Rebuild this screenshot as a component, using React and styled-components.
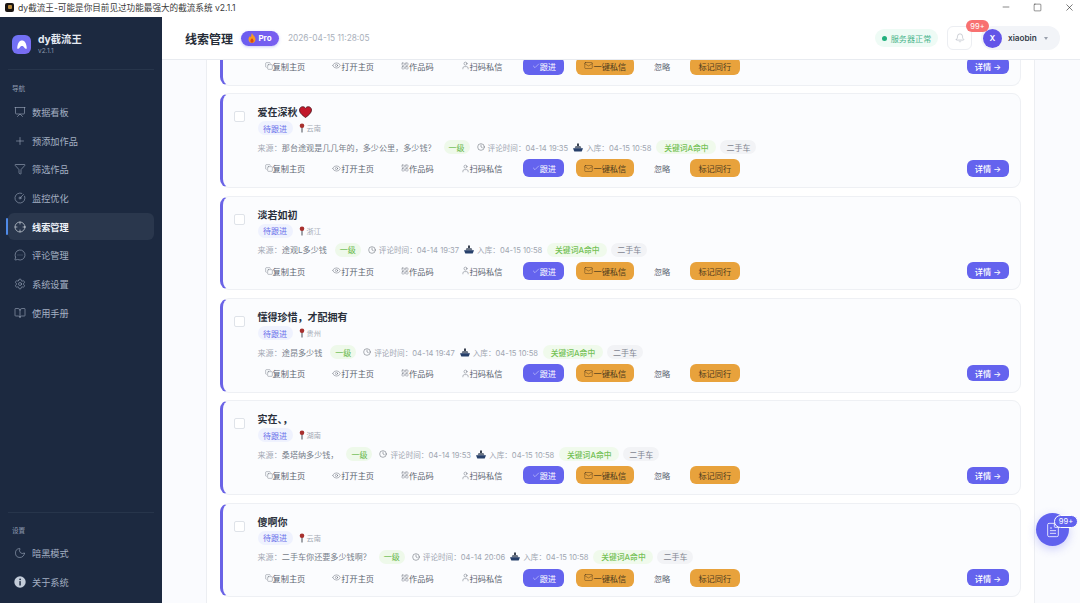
import React from "react";
import styled, { createGlobalStyle } from "styled-components";
import {
  Presentation, Plus, Funnel, CircleGauge, Crosshair, MessageCircleMore, Settings, BookOpen, Moon,
  Copy, Eye, LayoutGrid, User, Check, Mail, Clock, Bell, Minus, Square, X, FileText,
} from "lucide-react";

const FONT = `Inter, "Noto Sans CJK SC", "Noto Sans", sans-serif`;

const Global = createGlobalStyle`
  html, body { margin: 0; padding: 0; height: 100%; overflow: hidden; background: #fff; }
  * { box-sizing: border-box; }
  body { font-family: ${FONT}; }
`;

const Window = styled.div`
  position: relative;
  width: 1080px;
  height: 603px;
  display: flex;
  flex-direction: column;
  overflow: hidden;
`;

const TitleBar = styled.div`
  height: 17px;
  flex: none;
  display: flex;
  align-items: center;
  padding: 0 0 3px 5px;
  background: #fff;
  color: #3a3a3a;
  font-size: 8.6px;
`;
const AppGlyph = styled.div`
  width: 9px;
  height: 9px;
  border-radius: 2px;
  background: #1a1512;
  margin-right: 4px;
  display: flex;
  align-items: center;
  justify-content: center;
  &::after { content: ""; width: 4px; height: 4px; background: #b98a3a; border-radius: 1px; }
`;
const WindowControls = styled.div`
  margin-left: auto;
  display: flex;
  align-items: center;
  color: #222;
  padding-right: 5px;
  gap: 22px;
`;

const Body = styled.div`
  flex: 1;
  min-height: 0;
  display: flex;
`;

const Sidebar = styled.aside`
  width: 162px;
  flex: none;
  background: #1c2940;
  display: flex;
  flex-direction: column;
  padding: 0 8px 6px;
  color: #a7b3c6;
`;
const Brand = styled.div`
  height: 53px;
  display: flex;
  align-items: center;
  gap: 7px;
  padding: 3px 4px 0;
  border-bottom: 1px solid #27354b;
`;
const LogoBox = styled.div`
  width: 19px;
  height: 19px;
  border-radius: 6px;
  background: linear-gradient(135deg, #6d72f5, #7c6cf2);
  display: flex;
  align-items: center;
  justify-content: center;
`;
const BrandName = styled.div`
  font-size: 10.3px;
  font-weight: 700;
  line-height: 13px;
  color: #e5eaf2;
`;
const BrandVersion = styled.div`
  font-size: 6.5px;
  line-height: 10px;
  color: #8b98ac;
`;
const SectionLabel = styled.div`
  font-size: 6.6px;
  line-height: 10px;
  color: #8f9cb0;
  padding-left: 4px;
  margin: ${p => p.$top}px 0 ${p => p.$bottom}px;
`;
const NavItem = styled.div`
  position: relative;
  height: 27px;
  margin-bottom: 1.7px;
  border-radius: 6px;
  display: flex;
  align-items: center;
  gap: 6px;
  padding-left: 6px;
  font-size: 9.2px;
  font-weight: ${p => (p.$active ? 700 : 400)};
  color: ${p => (p.$active ? "#eef2f8" : "#a4b0c3")};
  background: ${p => (p.$active ? "#2a374d" : "transparent")};
  ${p => p.$active && `
    &::before {
      content: "";
      position: absolute;
      left: -2px;
      top: 5px;
      bottom: 5px;
      width: 2px;
      border-radius: 2px;
      background: #4f8ae8;
    }
  `}
`;
const Spacer = styled.div`
  flex: 1;
`;
const SideDivider = styled.div`
  height: 1px;
  background: #27354b;
`;

const Main = styled.main`
  flex: 1;
  min-width: 0;
  display: flex;
  flex-direction: column;
`;
const Header = styled.header`
  position: relative;
  z-index: 2;
  height: 43px;
  flex: none;
  background: #fff;
  border-bottom: 1px solid #e8ebf0;
  display: flex;
  align-items: center;
  padding: 0 20px 0 23px;
`;
const PageTitle = styled.h1`
  margin: 0;
  font-size: 12px;
  font-weight: 600;
  color: #252c38;
`;
const ProBadge = styled.div`
  margin-left: 8px;
  height: 15px;
  width: 38px;
  border-radius: 8px;
  background: linear-gradient(90deg, #6a5cf0, #7a5ff0);
  box-shadow: 0 1px 3px rgba(99, 102, 241, .35);
  display: flex;
  align-items: center;
  justify-content: center;
  gap: 2px;
  color: #fff;
  font-size: 8px;
  font-weight: 700;
`;
const Stamp = styled.div`
  margin-left: 9px;
  font-size: 8.3px;
  color: #a9b0bb;
`;
const HeaderRight = styled.div`
  margin-left: auto;
  display: flex;
  align-items: center;
`;
const ServerPill = styled.div`
  width: 63px;
  height: 18px;
  border-radius: 9px;
  background: #eefbf5;
  color: #4bb58c;
  font-size: 8.1px;
  display: flex;
  align-items: center;
  justify-content: center;
  gap: 4px;
  margin-right: 9px;
`;
const Dot = styled.span`
  width: 5px;
  height: 5px;
  border-radius: 50%;
  background: #22b07d;
`;
const BellButton = styled.div`
  position: relative;
  width: 25px;
  height: 24px;
  border: 1px solid #eceef2;
  border-radius: 6px;
  background: #fff;
  display: flex;
  align-items: center;
  justify-content: center;
  color: #9aa1ad;
  margin-right: 9px;
`;
const BellBadge = styled.span`
  position: absolute;
  left: 18px;
  top: -7px;
  width: 23px;
  height: 12px;
  border-radius: 6px;
  background: #f87171;
  color: #fff;
  font-size: 7.5px;
  display: flex;
  align-items: center;
  justify-content: center;
  z-index: 1;
`;
const UserPill = styled.div`
  width: 79px;
  height: 24px;
  border-radius: 12px;
  background: #f2f4f8;
  display: flex;
  align-items: center;
  padding-left: 2px;
  color: #343b48;
  font-size: 8.2px;
  font-weight: 600;
`;
const Avatar = styled.div`
  width: 19px;
  height: 19px;
  border-radius: 50%;
  background: #6355e8;
  color: #fff;
  font-size: 8px;
  font-weight: 600;
  display: flex;
  align-items: center;
  justify-content: center;
  margin-right: 6px;
`;
const Caret = styled.span`
  margin-left: 7px;
  width: 0;
  height: 0;
  border-left: 2.5px solid transparent;
  border-right: 2.5px solid transparent;
  border-top: 3px solid #9aa1ad;
`;

const Content = styled.div`
  flex: 1;
  min-height: 0;
  background: #fafbfe;
  padding-left: 44px;
  padding-right: 45px;
  overflow: hidden;
`;
const Panel = styled.section`
  height: 100%;
  background: #fff;
  border-left: 1px solid #eceef2;
  border-right: 1px solid #eceef2;
  padding: 0 13px 0 13px;
  display: grid;
  grid-template-rows: 25.5px repeat(5, 94.5px);
  row-gap: 7.85px;
  align-content: start;
`;
const Card = styled.article`
  border: 1px solid #eef0f4;
  border-left: 3px solid #6a63e6;
  border-radius: 9px;
  background: #fbfcfe;
  display: flex;
  padding: 10px 11px 9px 11px;
  min-height: 0;
`;
const ClippedCard = styled(Card)`
  border-top: none;
  border-top-left-radius: 0;
  border-top-right-radius: 0;
  padding-top: 0;
  overflow: hidden;
  align-items: flex-end;
  padding-bottom: 10px;
  padding-left: 34.5px;
`;
const CheckBox = styled.span`
  width: 10.5px;
  height: 11px;
  flex: none;
  border: 1px solid #dfe3e9;
  border-radius: 2px;
  background: #fff;
  margin: 7px 13px 0 0;
`;
const CardBody = styled.div`
  flex: 1;
  min-width: 0;
  display: flex;
  flex-direction: column;
`;
const NameLine = styled.div`
  height: 15px;
  display: flex;
  align-items: center;
  gap: 1px;
  font-size: 10px;
  font-weight: 600;
  color: #2a303b;
`;
const TagLine = styled.div`
  height: 14px;
  margin-top: 2px;
  display: flex;
  align-items: center;
  gap: 6px;
`;
const StatusTag = styled.span`
  width: 35px;
  height: 14px;
  border-radius: 7px;
  background: #eff2fe;
  color: #6d70ea;
  font-size: 8px;
  display: flex;
  align-items: center;
  justify-content: center;
`;
const Region = styled.span`
  display: flex;
  align-items: center;
  gap: 2px;
  font-size: 7.2px;
  color: #a3a9b4;
`;
const MetaLine = styled.div`
  height: 14px;
  margin-top: 5px;
  display: flex;
  align-items: center;
  font-size: 8.1px;
  color: #8d939f;
  white-space: nowrap;
`;
const Source = styled.span`
  color: #767c89;
  & > em { font-style: normal; color: #a3a9b4; }
`;
const LevelPill = styled.span`
  width: 26px;
  height: 14px;
  margin-left: 8px;
  border-radius: 7px;
  background: #eef9ea;
  color: #68b84b;
  font-size: 8px;
  display: flex;
  align-items: center;
  justify-content: center;
`;
const MetaTime = styled.span`
  margin-left: ${p => p.$left}px;
  display: flex;
  align-items: center;
  gap: 3px;
  color: #a0a6b1;
  font-size: 7.6px;
`;
const TimeIcon = styled.span`
  display: flex;
  color: #3f4652;
`;
const KeywordPill = styled.span`
  margin-left: 5px;
  height: 14px;
  width: 60px;
  border-radius: 7px;
  background: #f0faec;
  color: #74c155;
  font-size: 7.8px;
  font-weight: 500;
  display: flex;
  align-items: center;
  justify-content: center;
`;
const CategoryPill = styled.span`
  margin-left: 4px;
  height: 14px;
  width: 36px;
  border-radius: 7px;
  background: #f2f3f6;
  color: #7f8591;
  font-size: 8px;
  display: flex;
  align-items: center;
  justify-content: center;
`;
const ActionLine = styled.div`
  height: 18px;
  margin-top: 5px;
  padding-left: 7px;
  display: flex;
  align-items: center;
  flex: none;
`;
const LinkGroup = styled.div`
  display: flex;
  gap: 27px;
  margin-right: 21px;
`;
const ButtonGroup = styled.div`
  display: flex;
  align-items: center;
  gap: 12px;
`;
const LinkAction = styled.span`
  display: flex;
  align-items: center;
  font-size: 8.2px;
  color: #5c6370;
  white-space: nowrap;
`;
const FilledButton = styled.span`
  height: 18px;
  width: ${p => p.$w}px;
  border-radius: 6px;
  display: flex;
  align-items: center;
  justify-content: center;
  font-size: 8.2px;
  white-space: nowrap;
  background: ${p => (p.$tone === "orange" ? "#e8a23c" : "#6463ee")};
  color: ${p => (p.$tone === "orange" ? "#4e3b1e" : "#fff")};
`;
const IgnoreButton = styled.span`
  padding: 0 7.5px;
  font-size: 8.2px;
  color: #5c6370;
`;
const DetailButton = styled(FilledButton)`
  margin-left: auto;
  width: 42px;
  height: 16.5px;
  font-weight: 500;
`;

const FloatButton = styled.div`
  position: absolute;
  left: 1036px;
  top: 513px;
  width: 33px;
  height: 33px;
  border-radius: 50%;
  background: #6061ee;
  box-shadow: 0 3px 10px rgba(99, 102, 241, .3);
  color: #fff;
  display: flex;
  align-items: center;
  justify-content: center;
  z-index: 3;
`;
const FloatBadge = styled.span`
  position: absolute;
  left: 18px;
  top: 2px;
  width: 24px;
  height: 13px;
  border-radius: 7px;
  border: 1px solid #fff;
  background: #6061ee;
  color: #fff;
  font-size: 7.5px;
  display: flex;
  align-items: center;
  justify-content: center;
`;

const Logo = () => (
  <svg width="12" height="12" viewBox="0 0 12 12" fill="#fff">
    <path d="M6 1.5C3.4 1.5 1.5 4 1.2 9.5c1 .5 1.8.2 2.4-.8C4.2 7.5 5 7 6 7s1.8.5 2.4 1.7c.6 1 1.4 1.3 2.4.8C10.500 4 8.600 1.500 6 1.500z" />
  </svg>
);
const Flame = () => (
  <svg width="8" height="10" viewBox="0 0 8 10">
    <path d="M4 0C4.500 2 7.500 3.500 7.500 6.300 7.500 8.500 5.900 10 4 10S.5 8.500.5 6.300C.5 4.700 1.500 3.800 2 3c.3.700.6 1 1 1.200C3.300 2.800 3.300 1.200 4 0z" fill="#f59a23" />
    <path d="M4 5c.4 1 1.600 1.400 1.600 2.800C5.600 9 4.900 9.700 4 9.700S2.400 9 2.400 7.800C2.400 6.600 3.600 6 4 5z" fill="#d9480f" />
  </svg>
);
const Heart = () => (
  <svg width="13" height="12" viewBox="0 0 13 12">
    <path d="M6.500 11.500C3 9 .5 6.800.5 4 .5 2 2 .7 3.700.7c1.200 0 2.200.6 2.800 1.600C7.100 1.300 8.100.7 9.300.7 11 .7 12.500 2 12.500 4c0 2.800-2.500 5-6 7.500z" fill="#c2182b" stroke="#4a1018" strokeWidth=".8" />
  </svg>
);
const Pin = () => (
  <svg width="6" height="10" viewBox="0 0 6 10">
    <rect x="2.400" y="4" width="1.200" height="5.500" fill="#666a73" />
    <circle cx="3" cy="2.800" r="2.300" fill="#a8302e" />
  </svg>
);
const Ship = () => (
  <svg width="10" height="9" viewBox="0 0 10 9">
    <rect x="4" y="0.500" width="2" height="3" fill="#3a4352" />
    <path d="M2.500 3h5l1 2.500h-7z" fill="#6a7484" />
    <path d="M0 5.300h10L8.700 8.500H1.300z" fill="#27406b" />
  </svg>
);

const MAIN_NAV = [
  [Presentation, "数据看板"],
  [Plus, "预添加作品"],
  [Funnel, "筛选作品"],
  [CircleGauge, "监控优化"],
  [Crosshair, "线索管理", true],
  [MessageCircleMore, "评论管理"],
  [Settings, "系统设置"],
  [BookOpen, "使用手册"],
];

const LEADS = [
  { name: "爱在深秋", heart: true, region: "云南", source: "那台途观是几几年的\uFF0C多少公里\uFF0C多少钱\uFF1F", time: "04-14 19:35" },
  { name: "淡若如初", region: "浙江", source: "途观L多少钱", time: "04-14 19:37" },
  { name: "懂得珍惜\uFF0C才配拥有", region: "贵州", source: "途昂多少钱", time: "04-14 19:47" },
  { name: "实在、\uFF0C", region: "湖南", source: "桑塔纳多少钱\uFF0C", time: "04-14 19:53" },
  { name: "傻啊你", region: "云南", source: "二手车你还要多少钱啊\uFF1F", time: "04-14 20:06" },
];

const icon = { size: 12, strokeWidth: 1.15 };

const Actions = () => (
  <ActionLine>
    <LinkGroup>
      <LinkAction><Copy size={8} strokeWidth={1.2} />复制主页</LinkAction>
      <LinkAction><Eye size={9} strokeWidth={1.2} />打开主页</LinkAction>
      <LinkAction><LayoutGrid size={8} strokeWidth={1.2} />作品码</LinkAction>
      <LinkAction><User size={9} strokeWidth={1.2} />扫码私信</LinkAction>
    </LinkGroup>
    <ButtonGroup>
      <FilledButton $w={41}><Check size={8} strokeWidth={1.3} />跟进</FilledButton>
      <FilledButton $w={58} $tone="orange"><Mail size={9} strokeWidth={1.2} />一键私信</FilledButton>
      <IgnoreButton>忽略</IgnoreButton>
      <FilledButton $w={50} $tone="orange">标记同行</FilledButton>
    </ButtonGroup>
    <DetailButton>详情 →</DetailButton>
  </ActionLine>
);

const LeadCard = ({ lead }) => (
  <Card>
    <CheckBox />
    <CardBody>
      <NameLine>{lead.name}{lead.heart && <Heart />}</NameLine>
      <TagLine>
        <StatusTag>待跟进</StatusTag>
        <Region><Pin />{lead.region}</Region>
      </TagLine>
      <MetaLine>
        <Source><em>{"来源\uFF1A"}</em>{lead.source}</Source>
        <LevelPill>一级</LevelPill>
        <MetaTime $left={7}><TimeIcon><Clock size={8} strokeWidth={1.3} /></TimeIcon>{"评论时间\uFF1A"}{lead.time}</MetaTime>
        <MetaTime $left={5}><Ship />{"入库\uFF1A04-15 10:58"}</MetaTime>
        <KeywordPill>关键词A命中</KeywordPill>
        <CategoryPill>二手车</CategoryPill>
      </MetaLine>
      <Actions />
    </CardBody>
  </Card>
);

export default function App() {
  return (
    <Window>
      <Global />
      <TitleBar>
        <AppGlyph />
        dy截流王-可能是你目前见过功能最强大的截流系统 v2.1.1
        <WindowControls>
          <Minus size={10} strokeWidth={1.3} />
          <Square size={9} strokeWidth={1.3} />
          <X size={11} strokeWidth={1.3} />
        </WindowControls>
      </TitleBar>
      <Body>
        <Sidebar>
          <Brand>
            <LogoBox><Logo /></LogoBox>
            <div>
              <BrandName>dy截流王</BrandName>
              <BrandVersion>v2.1.1</BrandVersion>
            </div>
          </Brand>
          <SectionLabel $top={14} $bottom={4.5}>导航</SectionLabel>
          {MAIN_NAV.map(([Icon, label, active]) => (
            <NavItem key={label} $active={active}>
              <Icon {...icon} />
              {label}
            </NavItem>
          ))}
          <Spacer />
          <SideDivider />
          <SectionLabel $top={13} $bottom={4}>设置</SectionLabel>
          <NavItem><Moon {...icon} />暗黑模式</NavItem>
          <NavItem>
            <svg width="12" height="12" viewBox="0 0 11 11">
              <circle cx="5.500" cy="5.500" r="5.200" fill="#c3ccd9" />
              <rect x="4.900" y="4.700" width="1.300" height="4" fill="#1c2940" />
              <circle cx="5.600" cy="3" r=".8" fill="#1c2940" />
            </svg>
            关于系统
          </NavItem>
        </Sidebar>
        <Main>
          <Header>
            <PageTitle>线索管理</PageTitle>
            <ProBadge><Flame />Pro</ProBadge>
            <Stamp>2026-04-15 11:28:05</Stamp>
            <HeaderRight>
              <ServerPill><Dot />服务器正常</ServerPill>
              <BellButton>
                <Bell size={10} strokeWidth={1.2} />
                <BellBadge>99+</BellBadge>
              </BellButton>
              <UserPill>
                <Avatar>X</Avatar>
                xiaobin
                <Caret />
              </UserPill>
            </HeaderRight>
          </Header>
          <Content>
            <Panel>
              <ClippedCard>
                <CardBody>
                  <Actions />
                </CardBody>
              </ClippedCard>
              {LEADS.map(lead => <LeadCard key={lead.time} lead={lead} />)}
            </Panel>
          </Content>
        </Main>
      </Body>
      <FloatButton>
        <FileText size={16} strokeWidth={1.2} />
        <FloatBadge>99+</FloatBadge>
      </FloatButton>
    </Window>
  );
}
